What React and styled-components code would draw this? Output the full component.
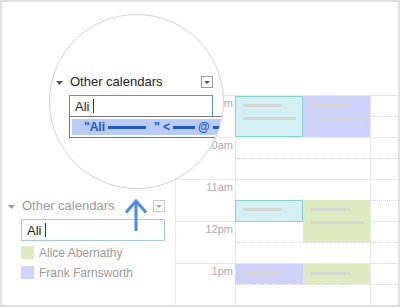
import React from "react";
import styled, {createGlobalStyle} from 'styled-components';

const GlobalStyle = createGlobalStyle`
    body {
        margin: 0;
        font-family: "Liberation Sans", Arial, sans-serif;
        background: #fff;
    }
`;

const Frame = styled.div`
    position: relative;
    width: 400px;
    height: 307px;
    box-sizing: border-box;
    border: 2px solid #e0e0e0;
    display: flex;
    overflow: hidden;
`;

const Sidebar = styled.div`
    width: 173px;
    padding: 197px 0 0 6px;
    box-sizing: border-box;
`;

const HeadingRow = styled.div`
    display: flex;
    align-items: center;
    width: 157px;
    height: 14px;
`;

const Caret = styled.svg`
    width: 7px;
    height: 4px;
    margin-top: 2px;
    fill: ${props => props.$zoomed ? '#555' : '#999'};
`;

const Heading = styled.span`
    margin-left: 7px;
    font-size: 13px;
    line-height: 14px;
    color: ${props => props.$zoomed ? '#222' : '#999'};
`;

const MenuButton = styled.div`
    margin-left: auto;
    width: 12px;
    height: 12px;
    box-sizing: border-box;
    border: 1px solid ${props => props.$zoomed ? '#999' : '#ccc'};
    display: flex;
    align-items: center;
    justify-content: center;

    svg {
        width: 6px;
        height: 3px;
        fill: ${props => props.$zoomed ? '#555' : '#aaa'};
    }
`;

const SearchBox = styled.div`
    position: relative;
    margin: 6px 0 0 13px;
    width: 144px;
    height: 22px;
    box-sizing: border-box;
    border: 1px solid ${props => props.$zoomed ? '#4d90fe' : '#a4c8f4'};
    padding-left: 5px;
    display: flex;
    align-items: center;
    font-size: 13px;
    color: #222;
`;

const TextCursor = styled.span`
    display: inline-block;
    width: 1px;
    height: 14px;
    margin-left: 4px;
    background: #333;
`;

const Suggestions = styled.div`
    position: absolute;
    left: -1px;
    top: 20px;
    width: 200px;
    height: 22px;
    box-sizing: border-box;
    border: 1px solid #777;
    background: #fff;
    padding: 2px;
`;

const SuggestionRow = styled.div`
    height: 16px;
    background: #b7cdf7;
    padding-left: 12px;
    display: flex;
    align-items: center;
    font-size: 12px;
    font-weight: bold;
    color: #1d57cb;
    white-space: pre;
`;

const Blank = styled.span`
    display: inline-block;
    width: ${props => props.$w}px;
    height: 3px;
    margin: 1px ${props => props.$gap || 3}px 0 3px;
    background: #1d57cb;
`;

const CalendarList = styled.div`
    margin: 5px 0 0 13px;
    display: flex;
    flex-direction: column;
    gap: 7px;
`;

const CalendarItem = styled.div`
    display: flex;
    align-items: center;
    gap: 5px;
    height: 13px;
    font-size: 12px;
    color: #999;
`;

const Swatch = styled.span`
    width: 13px;
    height: 13px;
    background: ${props => props.$color};
`;

const Magnifier = styled.div`
    position: absolute;
    left: 47px;
    top: 12px;
    width: 175px;
    height: 175px;
    box-sizing: border-box;
    border-radius: 50%;
    border: 1px solid #d2d2d2;
    background: #fff;
    overflow: hidden;
    padding: 60px 0 0 6px;
`;

const Arrow = styled.svg`
    position: absolute;
    left: 122px;
    top: 195px;
    width: 24px;
    height: 34px;
    fill: none;
    stroke: #4a89f3;
    stroke-width: 3;
`;

const Calendar = styled.div`
    flex: 1;
    display: flex;
    flex-direction: column;
`;

const Spacer = styled.div`
    height: 93px;
`;

const Grid = styled.div`
    display: flex;
    height: 210px;
`;

const Column = styled.div`
    position: relative;
    width: ${props => props.$width ? props.$width + 'px' : 'auto'};
    flex: ${props => props.$width ? 'none' : 1};
    border-left: 1px solid #e8e8e8;
    box-sizing: border-box;
`;

const Slot = styled.div`
    height: 42px;
    box-sizing: border-box;
    border-top: 1px solid #e8e8e8;
`;

const HalfSlot = styled.div`
    height: 20px;
    border-bottom: 1px dotted #d6d6d6;
`;

const TimeLabel = styled(Slot)`
    text-align: right;
    padding: 1px 2px 0 0;
    font-size: 11px;
    line-height: 13px;
    color: #aaa;
`;

const Event = styled.div`
    position: absolute;
    left: ${props => props.$left}px;
    top: ${props => props.$top}px;
    width: ${props => props.$width}px;
    height: ${props => props.$height}px;
    box-sizing: border-box;
    background: ${props => props.$bg};
    border: 1px solid ${props => props.$border || props.$bg};
    padding: 7px 0 0 7px;
    display: flex;
    flex-direction: column;
    gap: 10px;
`;

const Line = styled.div`
    width: ${props => props.$w}px;
    height: 3px;
    background: #d6d6d6;
`;

const CYAN = '#d3f0f5';
const BLUE = '#cfd2fc';
const GREEN = '#ddebbf';

const hours = ['9am', '10am', '11am', '12pm', '1pm'];

const events = [
    {top: 1, height: 41, left: -1, width: 68, bg: CYAN, border: '#80d6cc', lines: 2},
    {top: 1, height: 41, left: 67, width: 68, bg: BLUE, lines: 2},
    {top: 105, height: 22, left: -1, width: 68, bg: CYAN, border: '#80d6cc', lines: 1},
    {top: 105, height: 42, left: 67, width: 68, bg: GREEN, lines: 2},
    {top: 169, height: 20, left: -1, width: 68, bg: BLUE, lines: 1},
    {top: 169, height: 20, left: 67, width: 68, bg: GREEN, lines: 1},
];

const CaretIcon = ({zoomed}) => (
    <Caret $zoomed={zoomed} viewBox="0 0 7 4"><polygon points="0,0 7,0 3.5,4"/></Caret>
);

const OtherCalendars = ({zoomed}) => (
    <>
        <HeadingRow>
            <CaretIcon zoomed={zoomed}/>
            <Heading $zoomed={zoomed}>Other calendars</Heading>
            <MenuButton $zoomed={zoomed}>
                <svg viewBox="0 0 6 3"><polygon points="0,0 6,0 3,3"/></svg>
            </MenuButton>
        </HeadingRow>
        <SearchBox $zoomed={zoomed}>
            Ali<TextCursor/>
            {zoomed &&
            <Suggestions>
                <SuggestionRow>
                    "Ali<Blank $w={38} $gap={8}/>" &lt;<Blank $w={22}/>@<Blank $w={20}/>
                </SuggestionRow>
            </Suggestions>}
        </SearchBox>
    </>
);

const DayColumn = ({width, items}) => (
    <Column $width={width}>
        {hours.map(h => (
            <Slot key={h}><HalfSlot/></Slot>
        ))}
        {items.map((e, i) => (
            <Event key={i} $top={e.top} $height={e.height} $left={e.left} $width={e.width}
                   $bg={e.bg} $border={e.border}>
                <Line $w={39}/>
                {e.lines > 1 && <Line $w={53}/>}
            </Event>
        ))}
    </Column>
);

const App = () => (
    <Frame>
        <GlobalStyle/>
        <Sidebar>
            <OtherCalendars/>
            <CalendarList>
                <CalendarItem><Swatch $color={GREEN}/>Alice Abernathy</CalendarItem>
                <CalendarItem><Swatch $color={BLUE}/>Frank Farnsworth</CalendarItem>
            </CalendarList>
        </Sidebar>

        <Calendar>
            <Spacer/>
            <Grid>
                <Column $width={60}>
                    {hours.map(h => <TimeLabel key={h}>{h}</TimeLabel>)}
                </Column>
                <DayColumn width={135} items={events}/>
                <DayColumn items={[]}/>
            </Grid>
        </Calendar>

        <Magnifier>
            <OtherCalendars zoomed/>
        </Magnifier>

        <Arrow viewBox="0 0 24 34">
            <path d="M12 34 V4"/>
            <path d="M2 15.5 L12 4 L22 15.5"/>
        </Arrow>
    </Frame>
);

export default App;
